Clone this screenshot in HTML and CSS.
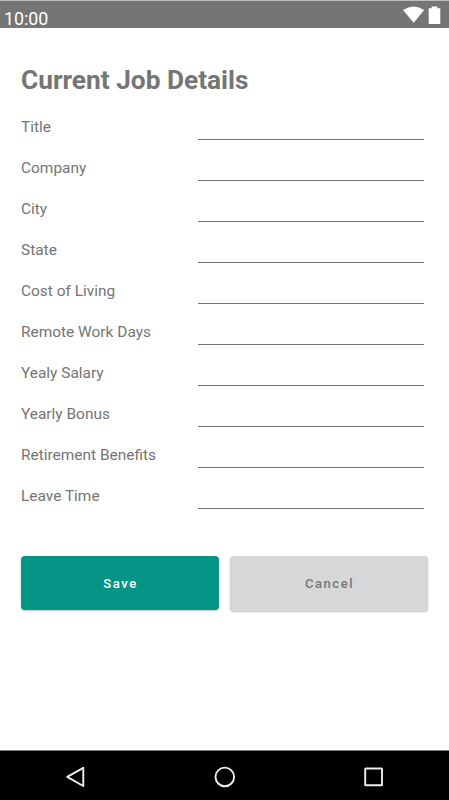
FILE: index.html
```
<!DOCTYPE html>
<html lang="en">
<head>
<meta charset="utf-8">
<title>Current Job Details</title>
<link rel="stylesheet" href="styles.css">
</head>
<body>
<header class="status">
  <span class="clock">10:00</span>
  <svg class="indicators" width="40" height="20" viewBox="0 0 40 20" fill="#fff">
    <path d="M0 6Q10.500-1 21.200 6L10.700 18.800Z"/>
    <path d="M25.700 4.200H28.600V2.500h5.800v1.700h2.900V20H25.700Z"/>
  </svg>
</header>
<main class="content">
  <h1>Current Job Details</h1>
  <form class="form">
    <label class="row"><span>Title</span><input type="text"></label>
    <label class="row"><span>Company</span><input type="text"></label>
    <label class="row"><span>City</span><input type="text"></label>
    <label class="row"><span>State</span><input type="text"></label>
    <label class="row"><span>Cost of Living</span><input type="text"></label>
    <label class="row"><span>Remote Work Days</span><input type="text"></label>
    <label class="row"><span>Yealy Salary</span><input type="text"></label>
    <label class="row"><span>Yearly Bonus</span><input type="text"></label>
    <label class="row"><span>Retirement Benefits</span><input type="text"></label>
    <label class="row"><span>Leave Time</span><input type="text"></label>
    <div class="actions">
      <button class="save" type="button">Save</button>
      <button class="cancel" type="button">Cancel</button>
    </div>
  </form>
</main>
<nav class="navbar">
  <svg width="24" height="24" viewBox="0 0 24 24"><path d="M21.300 2.800V21L5.200 11.900Z"/></svg>
  <svg width="24" height="24" viewBox="0 0 24 24"><circle cx="12.800" cy="11.900" r="9.300"/></svg>
  <svg width="24" height="24" viewBox="0 0 24 24"><rect x="3.200" y="3.500" width="16.800" height="16.800" rx=".6"/></svg>
</nav>
</body>
</html>
```
FILE: styles.css
```
* { box-sizing: border-box; }
body {
  margin: 0;
  height: 800px;
  display: flex;
  flex-direction: column;
  overflow: hidden;
  background: #fff;
  color: #757575;
  font-family: Roboto, sans-serif;
}
.status {
  height: 28px;
  display: flex;
  justify-content: space-between;
  padding: 4px 6px 0 4px;
  background: #757575;
  border-top: 1px solid #bdbfbe;
  color: #fff;
}
.clock { font-size: 17.8px; line-height: 28px; }
.indicators { margin-top: -1px; }
.content { flex: 1; padding: 36px 21px 0; }
h1 {
  margin: 0;
  height: 43px;
  font-size: 26.25px;
  line-height: 32px;
  font-weight: 700;
  white-space: nowrap;
}
.row {
  display: flex;
  height: 41px;
  font-size: 15.45px;
  line-height: 41px;
}
.row span { width: 177px; white-space: nowrap; }
.row input {
  width: 226px;
  height: 33px;
  padding: 0;
  border: 0;
  border-bottom: 1px solid #757575;
  border-radius: 0;
  background: none;
  outline: 0;
}
.actions {
  display: grid;
  grid-template-columns: 1fr 1fr;
  gap: 11px;
  margin-top: 39px;
}
button {
  height: 54px;
  padding: 0 0 0 1px;
  border: 0;
  border-radius: 4px;
  font: 500 13.1px Roboto, sans-serif;
  letter-spacing: 1.5px;
  box-shadow: 0 1px 2px rgba(0, 0, 0, .25);
}
.save { background: #049587; color: #fff; }
.cancel { height: 55px; background: #d6d7d9; color: #757575; }
.navbar {
  height: 50px;
  display: flex;
  justify-content: space-between;
  padding: 14px 63px 0 62px;
  background: #000;
  border-top: 1px solid #777b79;
}
.navbar svg {
  fill: none;
  stroke: #eee;
  stroke-width: 1.9;
  stroke-linejoin: round;
}
```
